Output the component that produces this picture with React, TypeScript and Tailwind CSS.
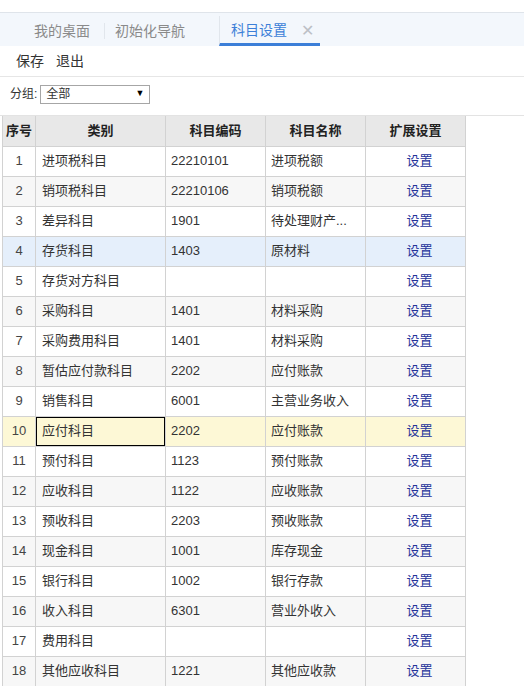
import React from 'react';

type Row = {
  kind: string;
  code: string;
  name: string;
};

const rows: Row[] = [
  { kind: '进项税科目', code: '22210101', name: '进项税额' },
  { kind: '销项税科目', code: '22210106', name: '销项税额' },
  { kind: '差异科目', code: '1901', name: '待处理财产...' },
  { kind: '存货科目', code: '1403', name: '原材料' },
  { kind: '存货对方科目', code: '', name: '' },
  { kind: '采购科目', code: '1401', name: '材料采购' },
  { kind: '采购费用科目', code: '1401', name: '材料采购' },
  { kind: '暂估应付款科目', code: '2202', name: '应付账款' },
  { kind: '销售科目', code: '6001', name: '主营业务收入' },
  { kind: '应付科目', code: '2202', name: '应付账款' },
  { kind: '预付科目', code: '1123', name: '预付账款' },
  { kind: '应收科目', code: '1122', name: '应收账款' },
  { kind: '预收科目', code: '2203', name: '预收账款' },
  { kind: '现金科目', code: '1001', name: '库存现金' },
  { kind: '银行科目', code: '1002', name: '银行存款' },
  { kind: '收入科目', code: '6301', name: '营业外收入' },
  { kind: '费用科目', code: '', name: '' },
  { kind: '其他应收科目', code: '1221', name: '其他应收款' },
];

const HOVER_ROW = 4;
const SELECTED_ROW = 10;

function rowBg(n: number) {
  if (n === SELECTED_ROW) return 'bg-[#fdf8d6]';
  if (n === HOVER_ROW) return 'bg-[#e5effb]';
  return n % 2 === 0 ? 'bg-[#f7f7f7]' : 'bg-white';
}

export default function App() {
  return (
    <div className="w-[524px] h-[686px] overflow-hidden bg-white text-[#333] font-['Liberation_Sans','Noto_Sans_CJK_SC',sans-serif]">
      {/* edge of the window above */}
      <div className="h-[13px] border-b border-[#dfe4ea]" />

      {/* tab bar */}
      <div className="h-[33px] bg-[#f3f7fc] flex items-stretch pl-[34px] pt-[3px] text-[14px] text-[#8a8a8a]">
        <div className="flex items-center pr-[14px] pt-[1px]">
          <span>我的桌面</span>
        </div>
        <div className="my-[7px] w-px bg-[#e1e6ec]" />
        <div className="flex items-center pl-[10px] pt-[1px]">
          <span>初始化导航</span>
        </div>
        <div className="ml-[34px] w-[101px] flex items-center pl-[11px] gap-[14px] border-l border-[#e1e6ec] border-b-[3px] border-b-[#3c7fd8] pt-[2px] text-[#3c7fd8]">
          <span>科目设置</span>
          <span className="text-[#bcc0c6] text-[16px] leading-none font-light">✕</span>
        </div>
      </div>

      {/* toolbar */}
      <div className="h-[31px] flex items-center gap-[12px] pl-[16px] pt-[1px] text-[14px] text-[#333] border-b border-[#e6e6e6]">
        <span>保存</span>
        <span>退出</span>
      </div>

      {/* filter */}
      <div className="h-[38px] flex items-center pl-[10px] pb-[4px] text-[12px] text-[#333]">
        <span>分组:</span>
        <div className="ml-[3px] w-[110px] h-[19px] border border-[#a6a6a6] flex items-center justify-between pl-[5px] pr-[5px] bg-white">
          <span>全部</span>
          <span className="text-[9px] text-black">▼</span>
        </div>
      </div>

      {/* grid */}
      <div className="border-t border-[#e3e3e3] pl-[2px]">
        <table className="border-collapse table-fixed w-[463px] text-[13px]">
          <colgroup>
            <col className="w-[33px]" />
            <col className="w-[130px]" />
            <col className="w-[100px]" />
            <col className="w-[100px]" />
            <col className="w-[100px]" />
          </colgroup>
          <thead>
            <tr className="h-[30px] bg-[#e8e8e8] font-bold text-[#222]">
              <th className="border border-[#d2d2d2] border-t-0 p-0 text-center">序号</th>
              <th className="border border-[#d2d2d2] border-t-0 p-0 text-center">类别</th>
              <th className="border border-[#d2d2d2] border-t-0 p-0 text-center">科目编码</th>
              <th className="border border-[#d2d2d2] border-t-0 p-0 text-center">科目名称</th>
              <th className="border border-[#d2d2d2] border-t-0 p-0 text-center">扩展设置</th>
            </tr>
          </thead>
          <tbody>
            {rows.map((r, i) => {
              const n = i + 1;
              const selected = n === SELECTED_ROW;
              return (
                <tr key={n} className={`h-[30px] ${rowBg(n)}`}>
                  <td className="border border-[#d2d2d2] p-0 text-center text-[#444]">{n}</td>
                  <td
                    className={
                      selected
                        ? 'border border-[#d2d2d2] shadow-[inset_0_0_0_1px_#000] pl-[6px] py-0 whitespace-nowrap'
                        : 'border border-[#d2d2d2] pl-[6px] py-0 whitespace-nowrap'
                    }
                  >
                    {r.kind}
                  </td>
                  <td className="border border-[#d2d2d2] pl-[5px] py-0">{r.code}</td>
                  <td className="border border-[#d2d2d2] pl-[5px] py-0 whitespace-nowrap overflow-hidden">{r.name}</td>
                  <td className="border border-[#d2d2d2] p-0 text-center">
                    <span className="pl-[8px] text-[#23329a]">设置</span>
                  </td>
                </tr>
              );
            })}
          </tbody>
        </table>
      </div>
    </div>
  );
}
